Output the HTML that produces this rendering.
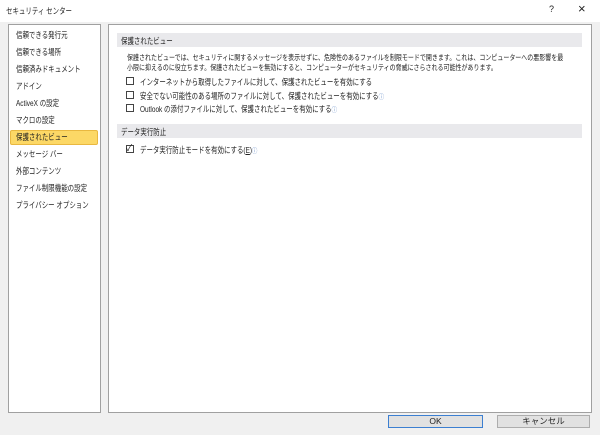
<!DOCTYPE html>
<html><head><meta charset="utf-8"><style>
*{margin:0;padding:0;box-sizing:border-box}
body{width:600px;height:435px;background:#f0f0f0;font-family:"Liberation Sans","Noto Sans CJK JP",sans-serif;font-size:8.5px;color:#222;position:relative;overflow:hidden}
.a{position:absolute;white-space:nowrap}
.t{transform:scaleX(0.76);transform-origin:0 0}
.title{left:0;top:0;width:600px;height:22px;background:#fff}
.panel{background:#fff;border:1px solid #a0a0a0}
.item{left:16px}
.cb{width:8px;height:8px;border:1px solid #444;background:#fff}
.hdr{left:117px;width:465px;height:14px;background:#e9e9ec}
.btn{height:13px;border:1px solid #adadad;background:#e1e1e1;text-align:center;line-height:11px}
.i{color:#6a8fc8;font-size:7px}
</style></head><body>
<div class="a title"></div>
<div class="a t" style="left:6px;top:5px">セキュリティ センター</div>
<div class="a" style="left:549px;top:4px;font-size:9px">?</div>
<div class="a" style="left:578px;top:1px;font-size:13px">×</div>
<div class="a panel" style="left:8px;top:24px;width:93px;height:389px"></div>
<div class="a panel" style="left:108px;top:24px;width:484px;height:389px"></div>
<div class="a item t" style="top:29px">信頼できる発行元</div>
<div class="a item t" style="top:46px">信頼できる場所</div>
<div class="a item t" style="top:63px">信頼済みドキュメント</div>
<div class="a item t" style="top:80px">アドイン</div>
<div class="a item t" style="top:97px">ActiveX の設定</div>
<div class="a item t" style="top:114px">マクロの設定</div>
<div class="a" style="left:10px;top:130px;width:88px;height:15px;background:#fcd866;border:1px solid #e9b840;border-radius:2px"></div>
<div class="a item t" style="top:131px">保護されたビュー</div>
<div class="a item t" style="top:148px">メッセージ バー</div>
<div class="a item t" style="top:165px">外部コンテンツ</div>
<div class="a item t" style="top:182px">ファイル制限機能の設定</div>
<div class="a item t" style="top:199px">プライバシー オプション</div>
<div class="a hdr" style="top:33px"></div>
<div class="a t" style="left:121px;top:35px">保護されたビュー</div>
<div class="a" style="left:127px;top:53px;font-size:7.6px;line-height:10px;transform:scaleX(0.79);transform-origin:0 0">保護されたビューでは、セキュリティに関するメッセージを表示せずに、危険性のあるファイルを制限モードで開きます。これは、コンピューターへの悪影響を最<br>小限に抑えるのに役立ちます。保護されたビューを無効にすると、コンピューターがセキュリティの脅威にさらされる可能性があります。</div>
<div class="a cb" style="left:126px;top:77px"></div>
<div class="a t" style="left:140px;top:76px">インターネットから取得したファイルに対して、保護されたビューを有効にする</div>
<div class="a cb" style="left:126px;top:91px"></div>
<div class="a t" style="left:140px;top:90px">安全でない可能性のある場所のファイルに対して、保護されたビューを有効にする<span class="i">ⓘ</span></div>
<div class="a cb" style="left:126px;top:104px"></div>
<div class="a t" style="left:140px;top:103px">Outlook の添付ファイルに対して、保護されたビューを有効にする<span class="i">ⓘ</span></div>
<div class="a hdr" style="top:124px"></div>
<div class="a t" style="left:121px;top:126px">データ実行防止</div>
<div class="a cb" style="left:126px;top:145px"></div>
<div class="a" style="left:126px;top:141px;font-size:9px">✓</div>
<div class="a t" style="left:140px;top:144px">データ実行防止モードを有効にする(<u>E</u>)<span class="i">ⓘ</span></div>
<div class="a btn" style="left:388px;top:415px;width:95px;border:1px solid #3c7fd1">OK</div>
<div class="a btn" style="left:497px;top:415px;width:93px">キャンセル</div>
</body></html>
